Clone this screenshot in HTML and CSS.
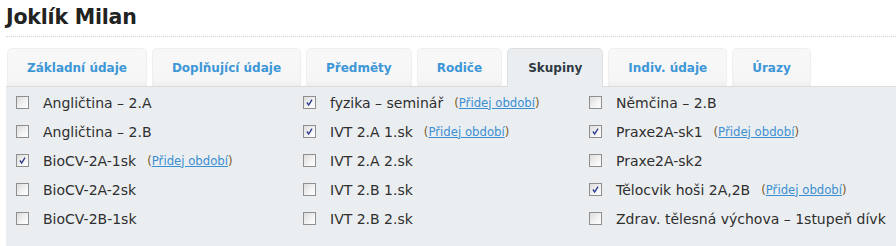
FILE: index.html
```html
<!DOCTYPE html>
<html lang="cs">
<head>
<meta charset="utf-8">
<title>Joklík Milan</title>
<link rel="stylesheet" href="styles.css">
</head>
<body>
<div class="page">
  <h1 class="title">Joklík Milan</h1>
  <div class="rule"></div>
  <ul class="tabs">
    <li class="tab">Základní údaje</li>
    <li class="tab">Doplňující údaje</li>
    <li class="tab">Předměty</li>
    <li class="tab">Rodiče</li>
    <li class="tab active">Skupiny</li>
    <li class="tab">Indiv. údaje</li>
    <li class="tab">Úrazy</li>
  </ul>
  <div class="panel">
    <div class="grid">
      <div class="item"><span class="cb"></span><span class="lbl">Angličtina – 2.A</span></div>
      <div class="item"><span class="cb on"><svg viewBox="0 0 13 13"><path d="M3.5 6.5 L5.5 9.5 L9.5 3" /></svg></span><span class="lbl">fyzika – seminář</span><span class="add">(<a href="#">Přidej období</a>)</span></div>
      <div class="item"><span class="cb"></span><span class="lbl">Němčina – 2.B</span></div>

      <div class="item"><span class="cb"></span><span class="lbl">Angličtina – 2.B</span></div>
      <div class="item"><span class="cb on"><svg viewBox="0 0 13 13"><path d="M3.5 6.5 L5.5 9.5 L9.5 3" /></svg></span><span class="lbl">IVT 2.A 1.sk</span><span class="add">(<a href="#">Přidej období</a>)</span></div>
      <div class="item"><span class="cb on"><svg viewBox="0 0 13 13"><path d="M3.5 6.5 L5.5 9.5 L9.5 3" /></svg></span><span class="lbl">Praxe2A-sk1</span><span class="add">(<a href="#">Přidej období</a>)</span></div>

      <div class="item"><span class="cb on"><svg viewBox="0 0 13 13"><path d="M3.5 6.5 L5.5 9.5 L9.5 3" /></svg></span><span class="lbl">BioCV-2A-1sk</span><span class="add">(<a href="#">Přidej období</a>)</span></div>
      <div class="item"><span class="cb"></span><span class="lbl">IVT 2.A 2.sk</span></div>
      <div class="item"><span class="cb"></span><span class="lbl">Praxe2A-sk2</span></div>

      <div class="item"><span class="cb"></span><span class="lbl">BioCV-2A-2sk</span></div>
      <div class="item"><span class="cb"></span><span class="lbl">IVT 2.B 1.sk</span></div>
      <div class="item"><span class="cb on"><svg viewBox="0 0 13 13"><path d="M3.5 6.5 L5.5 9.5 L9.5 3" /></svg></span><span class="lbl">Tělocvik hoši 2A,2B</span><span class="add">(<a href="#">Přidej období</a>)</span></div>

      <div class="item"><span class="cb"></span><span class="lbl">BioCV-2B-1sk</span></div>
      <div class="item"><span class="cb"></span><span class="lbl">IVT 2.B 2.sk</span></div>
      <div class="item"><span class="cb"></span><span class="lbl">Zdrav. tělesná výchova – 1stupeň dívk</span></div>
    </div>
  </div>
</div>
</body>
</html>
```
FILE: styles.css
```css
html, body {
  margin: 0;
  padding: 0;
  background: #ffffff;
  height: 100%;
}
body {
  font-family: "DejaVu Sans", Verdana, sans-serif;
  color: #2b2b2b;
  overflow: hidden;
}
.page {
  padding-left: 6px;
  height: 100%;
  box-sizing: border-box;
  display: flex;
  flex-direction: column;
}
.title {
  margin: 0;
  padding-top: 4px;
  height: 28px;
  flex: none;
  font-size: 20.5px;
  line-height: 26px;
  font-weight: bold;
  color: #222222;
  letter-spacing: -0.2px;
}
.rule {
  height: 0;
  flex: none;
  border-top: 1px dotted #d4d4d4;
  margin-top: 4px;
}
.tabs {
  list-style: none;
  margin: 11px 0 0 0;
  padding: 0 0 0 1px;
  display: flex;
  gap: 5px;
  height: 38px;
  flex: none;
}
.tab {
  height: 38px;
  box-sizing: border-box;
  padding: 0 19px;
  display: flex;
  align-items: center;
  justify-content: center;
  font-size: 12px;
  font-weight: bold;
  color: #3d96d6;
  background: linear-gradient(to bottom, #f8f8f8 0%, #f6f6f6 85%, #eeeeee 100%);
  border: 1px solid #efefef;
  border-bottom: none;
  border-radius: 5px 5px 0 0;
}
.tab.active {
  background: #ebeef0;
  color: #2e3a44;
  border-color: #dedede;
  position: relative;
  z-index: 1;
  height: 39px;
  margin-bottom: -1px;
  padding: 0 20px;
}
.panel {
  flex: 1;
  background: #ebeef0;
  border-top: 1px solid #dcdcdc;
  padding-left: 10px;
  padding-top: 1px;
}
.grid {
  display: grid;
  grid-template-columns: 287px 286px 300px;
  grid-auto-rows: 29px;
}
.item {
  display: flex;
  align-items: center;
  white-space: nowrap;
  font-size: 14px;
}
.cb {
  width: 13px;
  height: 13px;
  box-sizing: border-box;
  border: 1px solid #8f8f8f;
  background: linear-gradient(135deg, #dcdcdc 0%, #f4f4f4 60%, #ffffff 100%);
  flex: none;
  display: block;
}
.cb svg {
  display: block;
  width: 11px;
  height: 11px;
}
.cb svg path {
  fill: none;
  stroke: #2a3a8c;
  stroke-width: 1.6;
}
.lbl {
  margin-left: 14px;
  color: #2f2f2f;
}
.add {
  margin-left: 11px;
  font-size: 11.7px;
  color: #7a5a28;
}
.add a {
  color: #3b8fd3;
  text-decoration: underline;
}
```
